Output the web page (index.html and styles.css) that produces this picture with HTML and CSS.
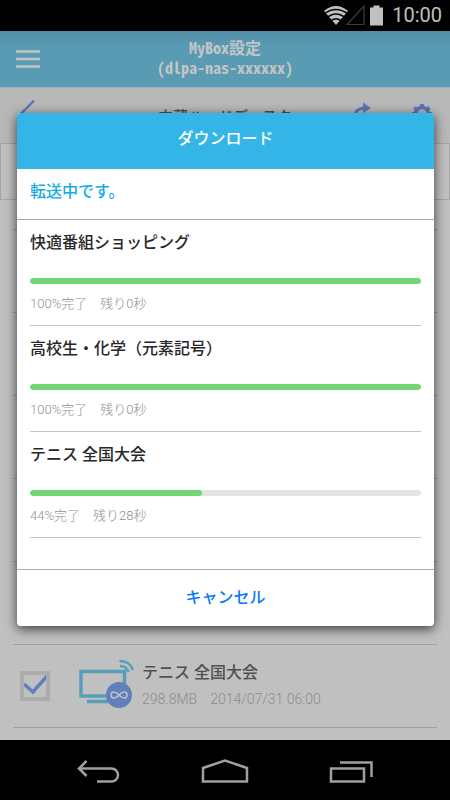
FILE: index.html
```html
<!DOCTYPE html>
<html lang="ja">
<head>
<meta charset="utf-8">
<meta name="viewport" content="width=device-width, initial-scale=1">
<title>MyBox設定</title>
<link rel="stylesheet" href="styles.css">
</head>
<body>
<div class="statusbar">
  <svg class="status-icons" width="60" height="21" viewBox="0 0 60 21" aria-hidden="true">
    <path d="M0 6Q12 -4 24 6L12 20Z" fill="#c0c0c0"/>
    <path d="M0 9Q12 0 24 9M2.500 13Q12 5 21.500 13M6 16.500Q12 11 18 16.500" fill="none" stroke="#000" stroke-width="1.300"/>
    <path d="M23 19.500H40V1Z" fill="none" stroke="#3c3c3c" stroke-width="1.200"/>
    <path d="M46 2.500h3.500V.5h6V2.500H59V20.500H46Z" fill="#c0c0c0"/>
  </svg>
  <span class="clock">10:00</span>
</div>
<header class="appbar">
  <button class="icon-button" type="button" aria-label="メニュー">
    <svg width="24" height="18" viewBox="0 0 24 18"><path d="M0 1.500H24M0 9H24M0 16.500H24" stroke="#c2c2c2" stroke-width="2.500"/></svg>
  </button>
  <h1 class="app-title">MyBox設定<br>(dlpa-nas-xxxxxx)</h1>
</header>
<div class="toolbar">
  <button class="icon-button" type="button" aria-label="戻る">
    <svg width="24" height="34" viewBox="0 0 24 34"><path d="M18 1.500L3 17L18 32.500" fill="none" stroke="#5878b8" stroke-width="2.500"/></svg>
  </button>
  <h2 class="folder-title">内蔵ハードディスク</h2>
  <div class="tools">
    <button class="icon-button" type="button" aria-label="共有">
      <svg width="20" height="32" viewBox="0 0 20 32"><path d="M3 20C2 11 6 8.500 13 8" fill="none" stroke="#5878b8" stroke-width="3"/><path d="M11 2.500L19 8L11 13Z" fill="#5878b8"/></svg>
    </button>
    <button class="icon-button" type="button" aria-label="設定">
      <svg width="24" height="24" viewBox="0 0 24 24"><circle cx="12" cy="10" r="6.500" fill="none" stroke="#5878b8" stroke-width="3.500"/><path d="M12 0V4M12 16V20M2 10H5M19 10H22M4.500 3.500L7 5.500M17 14.500L19.500 16.500M4.500 16.500L7 14.500M17 5.500L19.500 3.500" stroke="#5878b8" stroke-width="4"/></svg>
    </button>
  </div>
</div>
<main class="content">
  <div class="tabs"></div>
  <ul class="files">
    <li class="file"></li>
    <li class="file"></li>
    <li class="file"></li>
    <li class="file"></li>
    <li class="file"></li>
    <li class="file">
      <input class="check" type="checkbox" id="file-6" checked>
      <svg class="tv" width="56" height="54" viewBox="0 0 56 54" aria-hidden="true">
        <path d="M2 12.500H45.500V37H2ZM8 42.500H40" fill="none" stroke="#579fb8" stroke-width="3.500"/>
        <path d="M41 7Q47.500 7 49.500 13M40.500 2Q51 2 54 11" fill="none" stroke="#579fb8" stroke-width="2.500"/>
        <circle cx="40" cy="36" r="13" fill="#5f80bd"/>
        <path d="M40 36C37 32.500 32 31.500 32 36S37 39.500 40 36S48 31.500 48 36S43 39.500 40 36Z" fill="none" stroke="#c0c0c0" stroke-width="1.600"/>
      </svg>
      <label class="file-text" for="file-6">
        <span class="file-name">テニス 全国大会</span>
        <span class="file-meta"><span>298.8MB</span><span>2014/07/31 06:00</span></span>
      </label>
    </li>
  </ul>
</main>
<nav class="navbar">
  <button class="icon-button" type="button" aria-label="戻る">
    <svg width="44" height="26" viewBox="0 0 44 26"><path d="M2 9.500H34.500A6.500 6.500 0 0 1 34.500 22.500H20M9.500 2L2 9.500L9.500 17" fill="none" stroke="#a0a0a0" stroke-width="2.500"/></svg>
  </button>
  <button class="icon-button" type="button" aria-label="ホーム">
    <svg width="48" height="26" viewBox="0 0 48 26"><path d="M2 22.500V9L24 1.500L46 9V22.500Z" fill="none" stroke="#a0a0a0" stroke-width="2.500"/></svg>
  </button>
  <button class="icon-button" type="button" aria-label="履歴">
    <svg width="44" height="26" viewBox="0 0 44 26"><path d="M2 9.500H35V22.500H2ZM11 3.500H42.500V18" fill="none" stroke="#a0a0a0" stroke-width="2.500"/></svg>
  </button>
</nav>
<section class="dialog" role="dialog" aria-modal="true" aria-labelledby="dialog-title">
  <h2 class="dialog-title" id="dialog-title">ダウンロード</h2>
  <p class="dialog-status">転送中です。</p>
  <ul class="transfers">
    <li class="transfer">
      <label class="transfer-name" for="t1">快適番組ショッピング</label>
      <progress class="bar" id="t1" value="100" max="100"></progress>
      <p class="transfer-meta">100%完了　残り0秒</p>
    </li>
    <li class="transfer">
      <label class="transfer-name" for="t2">高校生・化学（元素記号）</label>
      <progress class="bar" id="t2" value="100" max="100"></progress>
      <p class="transfer-meta">100%完了　残り0秒</p>
    </li>
    <li class="transfer">
      <label class="transfer-name" for="t3">テニス 全国大会</label>
      <progress class="bar" id="t3" value="44" max="100"></progress>
      <p class="transfer-meta">44%完了　残り28秒</p>
    </li>
  </ul>
  <button class="cancel" type="button">キャンセル</button>
</section>
</body>
</html>
```

FILE: styles.css
```css
* {
  box-sizing: border-box;
}

body {
  position: relative;
  display: flex;
  flex-direction: column;
  min-height: 100vh;
  margin: 0;
  background: #c0c0c0;
  color: #505050;
  font-family: Roboto, "Noto Sans CJK JP", sans-serif;
}

h1, h2, p, ul {
  margin: 0;
  padding: 0;
}

ul {
  list-style: none;
}

svg {
  display: block;
}

button {
  padding: 0;
  border: 0;
  background: none;
  font-family: inherit;
}

.statusbar {
  display: flex;
  justify-content: flex-end;
  align-items: center;
  gap: 8px;
  height: 31px;
  padding-right: 8px;
  background: #000;
}

.clock {
  color: #c0c0c0;
  font-size: 20px;
  line-height: 31px;
}

.appbar {
  display: grid;
  grid-template-columns: 24px 1fr 24px;
  align-items: center;
  height: 57px;
  padding: 0 16px;
  border-bottom: 1px solid #a0b0b8;
  background: linear-gradient(#528ea6, #5a9bb4 16px);
}

.app-title {
  padding-bottom: 4px;
  color: #c4c4c4;
  font-family: "Noto Sans Mono CJK JP", "Noto Sans CJK JP", sans-serif;
  font-size: 16px;
  font-weight: 700;
  line-height: 20px;
  text-align: center;
}

.toolbar {
  display: grid;
  grid-template-columns: 82px 1fr 82px;
  align-items: center;
  height: 55px;
  padding: 0 16px;
  background: #b8b8b8;
}

.folder-title {
  font-size: 15px;
  font-weight: 500;
  text-align: center;
}

.tools {
  display: flex;
  justify-content: space-between;
  align-items: center;
}

.content {
  display: flex;
  flex: 1;
  flex-direction: column;
}

.tabs {
  height: 57px;
  border: 1px solid #a4a4a4;
}

.files {
  margin: 29px 13px 0;
  border-top: 1px solid #a0a0a0;
}

.file {
  display: flex;
  align-items: center;
  height: 83px;
  padding-left: 7px;
  border-bottom: 1px solid #a0a0a0;
}

.check {
  width: 30px;
  height: 30px;
  margin: 0 29px 0 0;
  border: 4px solid #acacac;
  appearance: none;
  background: url("data:image/svg+xml,%3Csvg xmlns='http://www.w3.org/2000/svg' viewBox='0 0 30 30'%3E%3Cpath d='M4 13L13 21L27 5' fill='none' stroke='%235f80bd' stroke-width='3.500'/%3E%3C/svg%3E") center / 30px no-repeat border-box;
}

.file-text {
  display: flex;
  flex-direction: column;
  padding-left: 7px;
}

.file-name {
  font-size: 16px;
  font-weight: 500;
  line-height: 26px;
}

.file-meta {
  display: flex;
  gap: 13px;
  color: #8c8c8c;
  font-size: 14px;
  font-weight: 300;
  line-height: 26px;
}

.navbar {
  display: flex;
  justify-content: space-between;
  align-items: center;
  height: 60px;
  padding: 4px 77px 0;
  background: #000;
}

.dialog {
  position: absolute;
  top: 113px;
  right: 16px;
  left: 17px;
  overflow: hidden;
  border-radius: 4px;
  background: #fff;
  box-shadow: 0 3px 12px rgba(0, 0, 0, 0.7);
}

.dialog-title {
  padding-bottom: 4px;
  background: #33b5e8;
  color: #fff;
  font-size: 16px;
  font-weight: 500;
  line-height: 52px;
  text-align: center;
}

.dialog-status {
  height: 51px;
  padding: 0 13px;
  border-bottom: 1px solid #a8a8a8;
  color: #14aee2;
  font-size: 16px;
  font-weight: 500;
  line-height: 46px;
}

.transfers {
  padding: 0 13px 31px;
}

.transfer {
  height: 106px;
  padding-top: 10px;
  border-bottom: 1px solid #c4c4c4;
}

.transfer-name {
  display: block;
  margin-bottom: 22px;
  color: #282828;
  font-size: 16px;
  font-weight: 500;
  line-height: 26px;
}

.bar {
  display: block;
  width: 100%;
  height: 6px;
  overflow: hidden;
  border: 0;
  border-radius: 3px;
  appearance: none;
  background: #e4e4e4;
}

.bar::-webkit-progress-bar {
  background: #e4e4e4;
}

.bar::-webkit-progress-value {
  border-radius: 3px;
  background: #72d674;
}

.transfer-meta {
  margin-top: 7px;
  color: #909090;
  font-size: 13px;
  font-weight: 300;
  line-height: 26px;
}

.cancel {
  display: block;
  width: 100%;
  border-top: 1px solid #b0b0b0;
  color: #0a78f8;
  font-size: 16px;
  font-weight: 500;
  line-height: 56px;
}
```
